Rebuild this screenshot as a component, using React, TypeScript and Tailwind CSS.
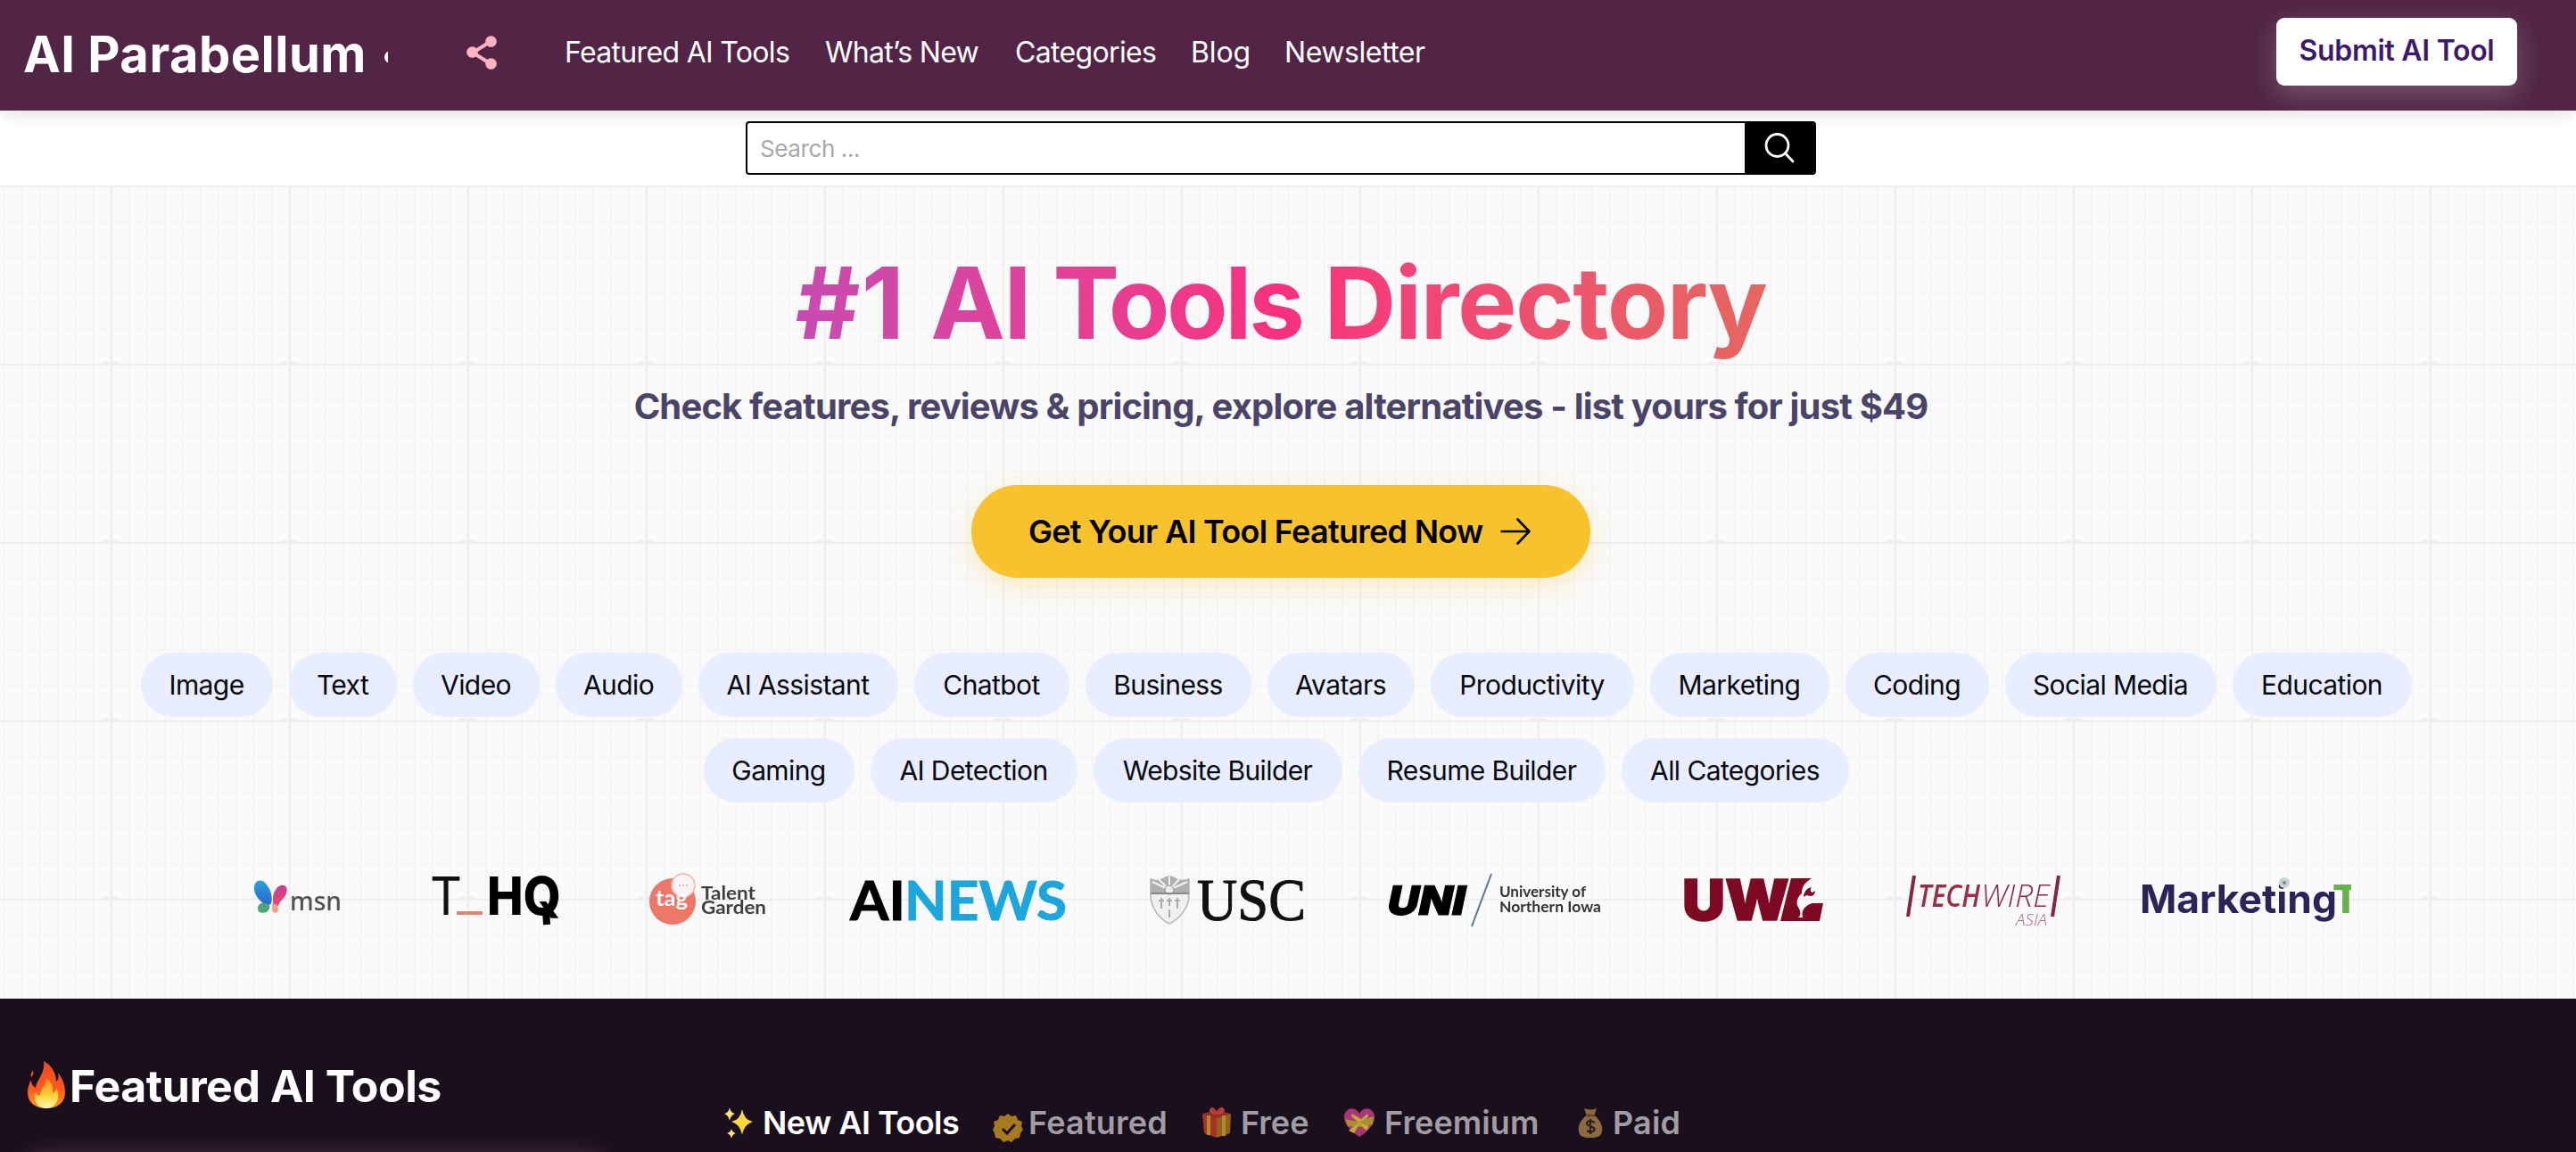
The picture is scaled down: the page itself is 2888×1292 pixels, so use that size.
import React from 'react';

const navLinks = [
  { label: 'Featured AI Tools', cls: 'w-[292px] tracking-[-0.67px]' },
  { label: 'What’s New', cls: 'w-[213px] tracking-[-0.7px]' },
  { label: 'Categories', cls: 'w-[197px] tracking-[-0.66px]' },
  { label: 'Blog', cls: 'w-[105px] tracking-[-0.1px]' },
  { label: 'Newsletter', cls: 'tracking-[-0.46px]' },
];

const firstRow = [
  { label: 'Image', w: 'w-[148px]' },
  { label: 'Text', w: 'w-[121px]' },
  { label: 'Video', w: 'w-[142px]' },
  { label: 'Audio', w: 'w-[142px]' },
  { label: 'AI Assistant', w: 'w-[224px]' },
  { label: 'Chatbot', w: 'w-[174px]' },
  { label: 'Business', w: 'w-[186px]' },
  { label: 'Avatars', w: 'w-[165px]' },
  { label: 'Productivity', w: 'w-[228px]' },
  { label: 'Marketing', w: 'w-[201px]' },
  { label: 'Coding', w: 'w-[161px]' },
  { label: 'Social Media', w: 'w-[237px]' },
  { label: 'Education', w: 'w-[201px]' },
];

const secondRow = [
  { label: 'Gaming', w: 'w-[169px]' },
  { label: 'AI Detection', w: 'w-[232px]' },
  { label: 'Website Builder', w: 'w-[279px]' },
  { label: 'Resume Builder', w: 'w-[277px]' },
  { label: 'All Categories', w: 'w-[255px]' },
];

function Pill({ label, w }: { label: string; w: string }) {
  return (
    <a className={`flex h-[72px] shrink-0 items-center justify-center rounded-full bg-[#e8eeff] pr-px text-[30px] tracking-[-0.6px] whitespace-nowrap text-[#05070d] ${w}`}>
      {label}
    </a>
  );
}

function GridBackdrop() {
  return (
    <svg className="absolute inset-0 h-full w-full" aria-hidden="true">
      <defs>
        <pattern id="minor" x="4" y="18" width="20" height="20" patternUnits="userSpaceOnUse">
          <rect width="1.5" height="20" fill="#f3f3f3" />
          <rect width="20" height="1.5" fill="#f5f5f5" />
        </pattern>
        <pattern id="major" x="104" y="178" width="200" height="200" patternUnits="userSpaceOnUse">
          <rect x="20" width="2" height="200" fill="#efefef" />
          <rect y="20" width="200" height="2" fill="#eeeeee" />
          <rect x="10" y="18" width="20" height="2" fill="#eeeeee" />
          <rect x="19" y="10" width="2" height="20" fill="#f1f1f1" />
        </pattern>
      </defs>
      <rect width="100%" height="100%" fill="url(#minor)" />
      <rect width="100%" height="100%" fill="url(#major)" />
    </svg>
  );
}

const logo = 'h-[64px] shrink-0 overflow-visible blur-[0.5px]';

function Logos() {
  return (
    <div className="relative mt-[76px] flex h-[64px] pl-[285px]">
      <svg className={`${logo} w-[98px]`} viewBox="285 976 98 64">
        <defs>
          <linearGradient id="msnL" x1="0" y1="0" x2="0" y2="1">
            <stop offset="0" stopColor="#27a3dc" />
            <stop offset="1" stopColor="#2a62d3" />
          </linearGradient>
          <linearGradient id="msnR" x1="0" y1="0" x2="0" y2="1">
            <stop offset="0" stopColor="#c63c94" />
            <stop offset="1" stopColor="#e94f68" />
          </linearGradient>
        </defs>
        <path d="M285 996c0-9 8-11 13-5 6 7 8 15 6 22-2 3-6 3-9 0-6-5-10-10-10-17z" fill="url(#msnL)" />
        <path d="M306 1012c-1-9 3-17 9-19 6-1 8 4 6 9-2 6-7 8-8 12-1 3-6 4-7 0z" fill="url(#msnR)" />
        <path d="M289 1019c0-6 5-7 9-6 5 1 5 5 3 8-3 4-12 4-12-2z" fill="#4ca574" />
        <path d="M305 1014c5-1 7 2 7 6 0 5-7 5-7 0z" fill="#f2a086" />
        <text x="325" y="1021" fontFamily="Noto Sans" fontWeight="500" fontSize="29" fill="#505050" textLength="58" lengthAdjust="spacingAndGlyphs">msn</text>
      </svg>
      <svg className={`${logo} ml-[102px] w-[141px]`} viewBox="485 976 141 64">
        <text x="482" y="1026" fontFamily="Inter" fontWeight="400" fontSize="59" fill="#111" textLength="36" lengthAdjust="spacingAndGlyphs">T</text>
        <rect x="512" y="1022" width="29" height="4" fill="#e08576" />
        <text x="546" y="1026" fontFamily="Inter" fontWeight="800" fontSize="59" fill="#000" textLength="83" lengthAdjust="spacingAndGlyphs">HQ</text>
        <path d="M612 1020l1 17" stroke="#000" strokeWidth="8" />
      </svg>
      <svg className={`${logo} ml-[102px] w-[131px]`} viewBox="728 976 131 64">
        <circle cx="754" cy="1011" r="26" fill="#ee7868" />
        <circle cx="766" cy="993" r="13" fill="#fbf4f4" stroke="#efb3b0" strokeWidth="1.5" />
        <circle cx="762" cy="993" r="1.2" fill="#c9c4c4" />
        <circle cx="766" cy="993" r="1.2" fill="#c9c4c4" />
        <circle cx="770" cy="993" r="1.2" fill="#c9c4c4" />
        <text x="735" y="1016" fontFamily="Lato" fontWeight="700" fontSize="24" fill="#fff" textLength="36" lengthAdjust="spacingAndGlyphs">tag</text>
        <text x="786" y="1009" fontFamily="Lato" fontWeight="700" fontSize="20" fill="#3f3f3f" textLength="61" lengthAdjust="spacingAndGlyphs">Talent</text>
        <text x="786" y="1025" fontFamily="Lato" fontWeight="700" fontSize="20" fill="#3f3f3f" textLength="73" lengthAdjust="spacingAndGlyphs">Garden</text>
      </svg>
      <svg className={`${logo} ml-[94px] w-[242px]`} viewBox="953 976 242 64">
        <text x="953" y="1032" fontFamily="Lato" fontWeight="700" fontSize="62" fill="#000" stroke="#000" strokeWidth="1" textLength="62" lengthAdjust="spacingAndGlyphs">AI</text>
        <text x="1014" y="1032" fontFamily="Lato" fontWeight="700" fontSize="62" fill="#1ba6dc" stroke="#1ba6dc" strokeWidth="1" textLength="182" lengthAdjust="spacingAndGlyphs">NEWS</text>
      </svg>
      <svg className={`${logo} ml-[94px] w-[175px]`} viewBox="1289 976 175 64">
        <path d="M1290 986q8 3 13 0 5-3 8-3t8 3q6 3 14 0v17c0 15-10 27-22 33-12-6-21-18-21-33z" fill="#f0f0f0" stroke="#b5b5b5" strokeWidth="1.500" />
        <path d="M1290 986q8 3 13 0 5-3 8-3t8 3q6 3 14 0v16h-43z" fill="#b0b0b0" />
        <path d="M1311 998l-19-9M1311 998l-13-13M1311 998v-15M1311 998l12-13M1311 998l20-9" stroke="#f2f2f2" strokeWidth="2" />
        <circle cx="1311" cy="998" r="5" fill="#eee" stroke="#888" />
        <path d="M1290 1002h43" stroke="#888" strokeWidth="2" />
        <path d="M1302 1007v12M1311 1007v9M1320 1007v12M1311 1020v9M1299 1010h6M1308 1010h6M1317 1010h6" stroke="#aaa" strokeWidth="2" />
        <text x="1342" y="1032" fontFamily="Liberation Serif" fontSize="68" fill="#111" stroke="#111" strokeWidth="1" textLength="122" lengthAdjust="spacingAndGlyphs">USC</text>
      </svg>
      <svg className={`${logo} ml-[91px] w-[241px]`} viewBox="1555 976 241 64">
        <text x="0" y="0" transform="translate(1553 1026) skewX(-12)" fontFamily="Inter" fontWeight="900" fontSize="45" fill="#000" stroke="#000" strokeWidth="1" textLength="87" lengthAdjust="spacingAndGlyphs">UNI</text>
        <path d="M1650 1039L1672 980" stroke="#5b7396" strokeWidth="2" />
        <text x="1681" y="1006" fontFamily="Lato" fontWeight="700" fontSize="17" fill="#333" textLength="97" lengthAdjust="spacingAndGlyphs">University of</text>
        <text x="1681" y="1023" fontFamily="Lato" fontWeight="700" fontSize="17" fill="#333" textLength="114" lengthAdjust="spacingAndGlyphs">Northern Iowa</text>
      </svg>
      <svg className={`${logo} ml-[93px] w-[156px]`} viewBox="1889 976 156 64">
        <text x="1886" y="1032" fontFamily="Inter" fontWeight="900" fontSize="63" fill="#7d0a22" stroke="#7d0a22" strokeWidth="1.5" textLength="120" lengthAdjust="spacingAndGlyphs">UW</text>
        <path d="M2008 985h23c-8 5-11 10-11 17-6 5-7 12-3 17 2 4 2 8-1 10h5c-2-8 3-14 11-16h12l-4 20h-44z" fill="#7d0a22" />
        <path d="M2022 1004q2-8 9-9-3 4 1 6l3-2q0 6-6 6l-4-1q-3 3-3 0z" fill="#7d0a22" />
      </svg>
      <svg className={`${logo} ml-[93px] w-[173px]`} viewBox="2138 976 173 64">
        <path d="M2146 982l-7 46M2308 982l-7 46" stroke="#842641" strokeWidth="4" />
        <text x="2150" y="1017" fontFamily="Open Sans" fontStyle="italic" fontWeight="600" fontSize="35" fill="#9c2c49" textLength="70" lengthAdjust="spacingAndGlyphs">TECH</text>
        <text x="2221" y="1017" fontFamily="Open Sans" fontStyle="italic" fontWeight="300" fontSize="35" fill="#8b2d48" textLength="77" lengthAdjust="spacingAndGlyphs">WIRE</text>
        <text x="2260" y="1038" fontFamily="Open Sans" fontStyle="italic" fontWeight="300" fontSize="18" fill="#a86a7d" textLength="35" lengthAdjust="spacingAndGlyphs">ASIA</text>
      </svg>
      <svg className="ml-[89px] h-[64px] w-[236px] shrink-0 overflow-hidden blur-[0.5px]" viewBox="2400 976 236 64">
        <text x="2399" y="1024" fontFamily="Inter" fontWeight="700" fontSize="44" fill="#2c2459" textLength="221" lengthAdjust="spacingAndGlyphs">Marketing</text>
        <circle cx="2561" cy="990" r="6" fill="#c8d2cf" />
        <circle cx="2561" cy="990" r="2" fill="#7d8987" />
        <text x="2615" y="1024" fontFamily="Inter" fontWeight="800" fontSize="44" fill="#67b04e">T</text>
      </svg>
    </div>
  );
}

function Fire() {
  return (
    <svg className="h-[56px] w-[44px]" viewBox="0 0 44 56">
      <defs>
        <linearGradient id="fireOuter" x1="0" y1="0" x2="0" y2="1">
          <stop offset="0" stopColor="#ee4a23" />
          <stop offset="0.6" stopColor="#ff5a1c" />
          <stop offset="1" stopColor="#ff9a1f" />
        </linearGradient>
        <linearGradient id="fireInner" x1="0" y1="0" x2="0" y2="1">
          <stop offset="0" stopColor="#ff8a1c" />
          <stop offset="0.6" stopColor="#ffd53a" />
          <stop offset="1" stopColor="#fff8b8" />
        </linearGradient>
      </defs>
      <path d="M19 1c9 5 14 13 14 23 3-2 3-6 2-10 5 6 8 14 8 22 0 12-9 18-21 18S1 48 1 36c0-6 2-10 4-14 0 5 2 7 5 9 1-9 11-16 9-30z" fill="url(#fireOuter)" />
      <path d="M5 19c-1-3 0-5 2-7 1 3 0 5-2 7z" fill="#ff5a1c" />
      <path d="M22 20c7 6 8 12 7 17 3-1 4-3 4-6 3 5 3 11 1 15-3 6-7 8-12 8-7 0-13-5-13-12 0-2 0-4 1-6 1 3 3 4 5 4 0-8 6-10 7-20z" fill="url(#fireInner)" />
    </svg>
  );
}

const tabIcon = 'h-[36px] w-[36px] shrink-0';

function Sparkles() {
  return (
    <svg className={tabIcon} viewBox="0 0 36 36">
      <path d="M21 3q2 12 12 14-10 3-12 15-2-12-12-15 10-2 12-14z" fill="#ffd93b" />
      <path d="M7 1q1 6 6 7-5 2-6 8-1-6-6-8 5-1 6-7zM9 25q1 4 5 5-4 1-5 6-1-5-5-6 4-1 5-5z" fill="#ffe27a" />
    </svg>
  );
}

function VerifiedBadge() {
  return (
    <svg className={`${tabIcon} mt-[10px]`} viewBox="0 0 36 36">
      <path d="M17 3l4 3 5-1 2 5 5 2-1 5 2 4-3 4-1 5-5 1-4 4-4-2-5 2-4-4-5-1-1-5-2-4 2-4-1-5 5-2 2-5 5 1z" fill="#a87a1e" />
      <path d="M11 20l5 5 9-10" stroke="#1a101f" strokeWidth="3" fill="none" />
    </svg>
  );
}

function Gift() {
  return (
    <svg className={tabIcon} viewBox="0 0 36 36">
      <path d="M2 8l16 4v23L4 30z" fill="#a83325" />
      <path d="M18 12l16-4-1 22-15 5z" fill="#92601f" />
      <path d="M2 8L18 4l16 4-16 5z" fill="#8f2f20" />
      <path d="M9 10v22M26 10v23" stroke="#b58a28" strokeWidth="4" />
      <path d="M18 9C12 9 8 5 11 2s6 1 7 6c1-6 5-9 8-6s-2 7-8 7z" fill="#b83c3c" />
    </svg>
  );
}

function HeartRibbon() {
  return (
    <svg className={tabIcon} viewBox="0 0 36 36">
      <path d="M18 34C8 28 1 20 1 12 1 1 14-1 18 8 22-1 35 1 35 12c0 8-7 16-17 22z" fill="#ab3479" />
      <path d="M2 14l14 3 18-6-1 9-14 3-14-1z" fill="#a8912c" />
      <path d="M17 18L6 27l6 3 6-10 8 7 3-5zM17 18L9 11l1-3 10 6 7-6 1 4z" fill="#c2a93a" />
    </svg>
  );
}

function MoneyBag() {
  return (
    <svg className={tabIcon} viewBox="0 0 36 36">
      <path d="M11 2q7 3 14 0l-3 9h-8z" fill="#8d6b42" />
      <path d="M13 10h10c7 7 9 12 8 18-1 5-4 7-13 7S6 33 5 28c-1-6 1-11 8-18z" fill="#8d6b42" />
      <path d="M13 10h10" stroke="#5f4526" strokeWidth="2.5" />
      <path d="M23 18q-5-3-8-1-3 3 3 5 6 2 4 5-3 3-8 0M18 14v17" stroke="#2b2020" strokeWidth="2.2" fill="none" />
    </svg>
  );
}

const tabs = [
  { label: 'New AI Tools', icon: <Sparkles />, cls: 'w-[302px] gap-[8px] text-white tracking-[-0.53px]' },
  { label: 'Featured', icon: <VerifiedBadge />, cls: 'w-[233px] gap-[4px] text-[#a29da4] tracking-[0.2px]' },
  { label: 'Free', icon: <Gift />, cls: 'w-[160px] gap-[9px] text-[#a29da4]' },
  { label: 'Freemium', icon: <HeartRibbon />, cls: 'w-[259px] gap-[10px] text-[#a29da4] tracking-[0.1px]' },
  { label: 'Paid', icon: <MoneyBag />, cls: 'gap-[7px] text-[#a29da4] tracking-[0.2px]' },
];

export default function App() {
  return (
    <div className="flex h-[1292px] w-[2888px] flex-col overflow-hidden bg-white font-['Inter',sans-serif]">
      <header className="relative z-10 h-[124px] shrink-0 bg-[#522546] shadow-[0_4px_18px_rgba(0,0,0,0.12)]">
        <div className="flex h-[124px] overflow-hidden pb-[7px] pl-[26px]">
          <div className="flex w-[497px] items-center">
            <span className="mt-[4px] w-[405px] text-[56px] font-bold tracking-[0.5px] whitespace-nowrap text-white">AI Parabellum</span>
            <span className="mt-[10px] h-[14px] w-[4px] overflow-hidden">
              <span className="block h-[14px] w-[14px] rounded-full bg-white" />
            </span>
          </div>
          <div className="flex w-[110px] items-center">
            <svg className="h-[38px] w-[34px]" viewBox="0 0 34 38">
              <path d="M27 6.500L7 19l20 12.500" stroke="#ffb3bf" strokeWidth="4" fill="none" />
              <circle cx="27.500" cy="6.500" r="6.300" fill="#ffb3bf" />
              <circle cx="6.500" cy="18.500" r="6.300" fill="#ffb3bf" />
              <circle cx="27.500" cy="31.500" r="6.300" fill="#ffb3bf" />
            </svg>
          </div>
          <nav className="flex items-center text-[32px] whitespace-nowrap text-white">
            {navLinks.map((n) => (
              <a key={n.label} className={n.cls}>{n.label}</a>
            ))}
          </nav>
          <a className="mt-[20px] mr-[66px] ml-auto flex h-[76px] w-[270px] items-center justify-center rounded-[9px] bg-white pb-[3px] text-[32px] font-semibold tracking-[-0.3px] whitespace-nowrap text-[#3c1a6b] shadow-[0_10px_30px_rgba(255,255,255,0.22)]">
            Submit AI Tool
          </a>
        </div>
      </header>

      <div className="h-[86px] shrink-0 border-b-2 border-[#eeeeee] bg-white pt-[12px] pl-[836px]">
        <div className="flex h-[60px] w-[1200px] overflow-hidden rounded-[4px] border-2 border-black bg-white">
          <div className="flex flex-1 items-center pl-[14px] text-[26px] tracking-[-0.4px] text-[#a9a9a9]">
            <span>Search ...</span>
          </div>
          <button className="flex w-[78px] items-center justify-center bg-black">
            <svg className="h-[36px] w-[36px]" viewBox="0 0 36 36" fill="none" stroke="#fff" strokeWidth="2.800" strokeLinecap="round">
              <circle cx="15.500" cy="15" r="12.500" />
              <path d="M24.500 24l8.500 9" />
            </svg>
          </button>
        </div>
      </div>

      <main className="relative h-[910px] shrink-0 overflow-hidden bg-[#fafafa] pt-[69px]">
        <GridBackdrop />
        <div className="relative flex w-[2872px] flex-col items-center">
          <h1 className="bg-linear-to-r from-[#c84bb0] via-[#f8307f] to-[#e5665f] bg-clip-text pb-[12px] text-[112px] leading-[120px] font-bold tracking-[-1.59px] whitespace-nowrap text-transparent">
            <span className="tracking-[1.400px]">#1 </span>
            <span>AI </span>
            <span className="tracking-[-3.400px]">Tools</span> Directory
          </h1>
          <p className="mt-[21px] text-[40px] leading-[48px] font-bold tracking-[-0.84px] whitespace-nowrap text-[#494468]">
            Check features, reviews &amp; pricing, explore alternatives - list yours for just $49
          </p>
          <a className="mt-[64px] flex h-[104px] w-[694px] items-center rounded-full bg-[#f7c22b] pl-[64px] text-[36px] font-semibold tracking-[-0.72px] whitespace-nowrap text-black shadow-[0_8px_30px_rgba(247,194,43,0.3)]">
            <span className="w-[529px]">Get Your AI Tool Featured Now</span>
            <svg className="h-[30px] w-[34px]" viewBox="0 0 34 30" fill="none" stroke="#000" strokeWidth="2.600" strokeLinecap="round" strokeLinejoin="round">
              <path d="M1.500 15h31M19.500 1.500L32.500 15l-13 13.500" />
            </svg>
          </a>
        </div>
        <div className="relative mt-[84px] flex gap-[18px] pl-[158px]">
          {firstRow.map((p) => (
            <Pill key={p.label} label={p.label} w={p.w} />
          ))}
        </div>
        <div className="relative mt-[24px] flex gap-[18px] pl-[789px]">
          {secondRow.map((p) => (
            <Pill key={p.label} label={p.label} w={p.w} />
          ))}
        </div>
        <Logos />
      </main>

      <section className="flex flex-1 bg-[#1a0f1d] pl-[30px]">
        <div className="w-[781px] pt-[67px]">
          <h2 className="flex h-[60px] items-center gap-[4px] text-[50px] font-bold tracking-[-0.45px] whitespace-nowrap text-white">
            <Fire />
            <span className="pt-[3px]">Featured AI Tools</span>
          </h2>
          <div className="mt-[46px] h-[200px] w-[648px] rounded-[16px] bg-[#3c263b] shadow-[0_0_22px_#4d3048]" />
        </div>
        <div className="flex h-[60px] pt-[109px] text-[36px] font-semibold whitespace-nowrap">
          {tabs.map((t) => (
            <a key={t.label} className={`flex h-[60px] items-center ${t.cls}`}>
              {t.icon}
              <span>{t.label}</span>
            </a>
          ))}
        </div>
      </section>
    </div>
  );
}
